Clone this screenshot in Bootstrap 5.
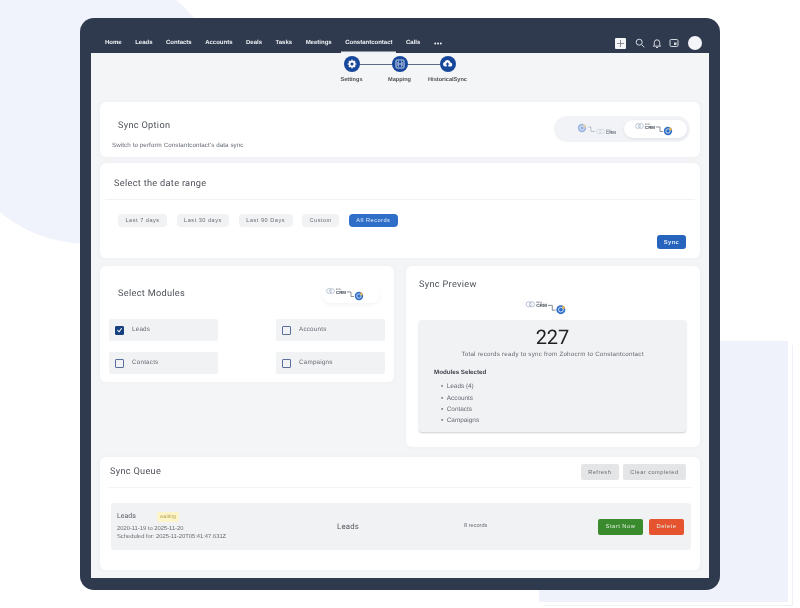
<!DOCTYPE html>
<html lang="en">
<head>
<meta charset="UTF-8">
<title>Constantcontact Sync</title>
<link href="https://cdn.jsdelivr.net/npm/bootstrap@5.3.0/dist/css/bootstrap.min.css" rel="stylesheet">
<style>
    html, body { height: 608px; overflow: hidden; }
    body { background: #fff; font-family: Roboto, "Liberation Sans", sans-serif; color: #4a4f57; position: relative; text-rendering: geometricPrecision; }
    .blob-a { position: absolute; left: -50px; top: -32px; width: 276px; height: 276px; border-radius: 0 50% 50% 50%; background: #f1f3fc; }
    .blob-b { position: absolute; left: 539px; top: 341px; width: 249px; height: 261px; background: #eff2fb; }
    .blob-c { position: absolute; left: 544px; top: 345px; width: 249px; height: 261px; border: 1px solid #eef1f8; border-left: 0; border-top: 0; }
    .device { position: relative; margin: 18px 0 0 80px; width: 640px; height: 572px; background: #2f3a4e; border-radius: 14px; padding: 0 11px 12px; display: flex; flex-direction: column; filter: blur(.3px); }
    .topbar { height: 35px; flex: none; padding: 15px 7px 0 14px; }
    .topbar a { color: #eef0f4; font-family: "Liberation Sans", sans-serif; font-size: 6px; font-weight: 700; text-decoration: none; height: 20px; line-height: 20px; display: block; margin-right: 13.5px; }
    .topbar a.on { box-shadow: inset 0 -1.5px 0 #eef0f4; margin: 0 9.500px 0 -4px; padding: 0 4px; }
    .top-icon { width: 12px; height: 12px; margin-left: 5px; }
    .plus-box { width: 11px; height: 11px; background: #f4f5f7; border-radius: 1px; margin-right: 3px; }
    .avatar { width: 14px; height: 14px; background: #f4f5f8; border-radius: 50%; margin-left: 8px; }
    .screen { flex: 1; background: #f4f5f7; padding: 0 9px; overflow: hidden; }
    .stepper { height: 49px; padding-top: 3px; margin-left: -1px; }
    .step { width: 48px; }
    .step-dot { width: 16px; height: 16px; border-radius: 50%; background: #17479a; position: relative; z-index: 1; }
    .step-label { font-family: "Liberation Sans", sans-serif; font-size: 5.6px; font-weight: 700; color: #4b4f55; margin-top: 4px; white-space: nowrap; }
    .step-line { position: absolute; left: 24px; right: 24px; top: 7.5px; height: 1px; background: #5b6a85; }
    .step-row { position: relative; }
    .panel { background: #fff; border-radius: 6px; box-shadow: 0 0 4px rgba(60, 70, 90, .04); }
    .panel-sync { height: 55px; padding: 17px 10px 0 12px; margin-bottom: 6px; }
    .panel-title { font-size: 9.2px; letter-spacing: .3px; color: #4d5158; font-weight: 400; margin: 0; }
    .title-inset { padding-left: 6px; }
    .sub-note { font-family: "Liberation Sans", sans-serif; font-size: 6.2px; letter-spacing: .1px; color: #666b72; margin-top: 8px; }
    .switcher { width: 136px; height: 26px; border-radius: 13px; background: #f1f3f6; padding: 4px 3px 4px 0; margin-top: -3px; }
    .switch-side { width: 68px; opacity: .75; padding-left: 20px; }
    .switch-active { width: 63px; height: 18px; background: #fff; border-radius: 9px; box-shadow: 0 1px 3px rgba(60, 70, 90, .1); margin-left: auto; }
    .crm-word { font-family: "Liberation Sans", sans-serif; font-size: 4.4px; font-weight: 700; fill: #3b4350; }
    .zoho-word { font-family: "Liberation Sans", sans-serif; font-size: 2.4px; fill: #3b4350; }
    .panel-range { height: 95px; padding: 0 5px; margin-bottom: 8px; }
    .range-head { height: 37px; padding: 14px 9px 0; border-bottom: 1px solid #f1f2f4; }
    .chip-row { padding: 14px 0 0 13px; gap: 9.5px; }
    .chip { background: #f1f2f4; color: #666b72; font-family: "Liberation Sans", sans-serif; font-size: 5.6px; letter-spacing: .5px; border: 0; border-radius: 4px; height: 13px; padding: 0 7.5px; line-height: 13px; }
    .chip.chosen { background: #2f6fc7; color: #eaf1fb; }
    .sync-go { background: #2664bd; color: #e6eefa; font-family: "Liberation Sans", sans-serif; font-size: 5.8px; letter-spacing: .4px; border: 0; border-radius: 3px; width: 29px; height: 14px; padding: 0; margin: 8px 9px 0 auto; display: block; font-weight: 700; }
    .lower { gap: 12px; margin-bottom: 10px; align-items: flex-start; }
    .panel-mods { width: 294px; height: 116px; padding: 0 9px; }
    .panel-preview { width: 294px; height: 181px; padding: 12px 14px 0 13px; }
    .mods-head { height: 53px; padding: 3px 5px 0 9px; }
    .logo-pill { width: 58px; height: 18px; border-radius: 9px; box-shadow: 0 2px 4px rgba(60, 70, 90, .06); padding-left: 4px; }
    .mods-grid { display: grid; grid-template-columns: 109px 109px; justify-content: space-between; row-gap: 11px; }
    .mod-item { background: #f1f2f4; height: 22px; border-radius: 2px; padding-left: 6px; font-family: "Liberation Sans", sans-serif; font-size: 6.3px; letter-spacing: .2px; color: #666b72; gap: 8px; }
    .tick { width: 9px; height: 9px; border: 1px solid #5c6f9c; border-radius: 1px; flex: none; }
    .tick.set { background: #17407f; border-color: #17407f; }
    .flow-small { margin-right: 10px; }
    .preview-box { background: #f1f2f4; border-radius: 3px; height: 112px; box-shadow: 0 1px 2px rgba(0, 0, 0, .2); padding: 5px 15px 0; margin-top: 5px; width: 267px; }
    .preview-count { font-size: 20px; line-height: 24px; color: #222; text-align: center; }
    .preview-text { font-family: "Liberation Sans", sans-serif; font-size: 6.2px; letter-spacing: .25px; text-align: center; color: #666b72; margin-top: 1px; }
    .preview-head { font-family: "Liberation Sans", sans-serif; font-size: 6.2px; font-weight: 700; color: #3f434a; margin-top: 9px; }
    .preview-list { font-family: "Liberation Sans", sans-serif; font-size: 6.4px; color: #666b72; margin: 4px 0 0; padding: 0 0 0 7px; line-height: 11.3px; list-style: none; }
    .preview-list li::before { content: "\2022"; margin-right: 3.5px; }
    .panel-queue { height: 113px; padding: 0 9px 0 9px; }
    .queue-head { height: 31px; border-bottom: 1px solid #f2f3f5; padding: 0 5px 0 1px; margin-bottom: 15px; }
    .queue-btn { background: #e4e5e7; color: #666b72; font-family: "Liberation Sans", sans-serif; font-size: 5.6px; letter-spacing: .5px; border: 0; border-radius: 2px; height: 16px; padding: 0 7.5px; }
    .queue-row { background: #f1f2f4; height: 47px; border-radius: 3px; margin-left: 2px; padding: 0 7px 0 6px; }
    .job-cell { width: 220px; color: #666b72; font-family: "Liberation Sans", sans-serif; font-size: 5.8px; line-height: 8px; }
    .job-name { font-family: Roboto, sans-serif; font-size: 7px; color: #5a5f66; }
    .waiting { background: #fdf5c9; color: #b9a450; font-size: 5.2px; padding: 2px 3px; border-radius: 2px; margin-left: 21px; }
    .job-module { width: 127px; font-size: 7.8px; color: #55595f; letter-spacing: .2px; }
    .job-count { font-family: "Liberation Sans", sans-serif; font-size: 5.6px; color: #666b72; }
    .act-start, .act-del { color: #e8efe6; font-family: "Liberation Sans", sans-serif; font-size: 5.8px; letter-spacing: .5px; border: 0; border-radius: 2px; height: 16px; padding: 0; }
    .act-start { background: #3a8a2e; width: 45px; margin-right: 6px; }
    .act-del { background: #e6532f; width: 35px; }
</style>
</head>
<body>
<div class="blob-a"></div>
<div class="blob-b"></div>
<div class="blob-c"></div>

<div class="device">
    <nav class="topbar d-flex align-items-center">
        <a href="#">Home</a>
        <a href="#">Leads</a>
        <a href="#">Contacts</a>
        <a href="#">Accounts</a>
        <a href="#">Deals</a>
        <a href="#">Tasks</a>
        <a href="#">Meetings</a>
        <a href="#" class="on">Constantcontact</a>
        <a href="#">Calls</a>
        <svg width="8" height="3" viewBox="0 0 8 3"><circle cx="1.200" cy="1.500" r="1" fill="#eef0f4"/><circle cx="4" cy="1.500" r="1" fill="#eef0f4"/><circle cx="6.800" cy="1.500" r="1" fill="#eef0f4"/></svg>
        <div class="ms-auto d-flex align-items-center">
            <div class="plus-box d-flex align-items-center justify-content-center">
                <svg width="7" height="7" viewBox="0 0 7 7"><path d="M3.500 0v7M0 3.500h7" stroke="#6d7480" stroke-width=".8"/></svg>
            </div>
            <svg class="top-icon" viewBox="0 0 12 12" fill="none" stroke="#d5d9e0" stroke-width="1"><circle cx="5.200" cy="5.200" r="3"/><path d="M7.500 7.500l2.800 2.800"/></svg>
            <svg class="top-icon" viewBox="0 0 12 12" fill="none" stroke="#d5d9e0" stroke-width="1"><path d="M3.300 8.300V5.500a2.700 2.700 0 0 1 5.400 0v2.800l1 .8H2.300zM5 10.500h2"/></svg>
            <svg class="top-icon" viewBox="0 0 12 12" fill="none" stroke="#d5d9e0" stroke-width="1"><rect x="2" y="2.500" width="8" height="7" rx="1.200"/><rect x="6" y="5.500" width="2.500" height="2.500" fill="#d5d9e0" stroke="none"/></svg>
            <div class="avatar"></div>
        </div>
    </nav>

    <main class="screen">
        <div class="stepper d-flex justify-content-center">
            <div class="step-row d-flex">
                <div class="step-line"></div>
                <div class="step d-flex flex-column align-items-center">
                    <div class="step-dot d-flex align-items-center justify-content-center">
                        <svg width="10" height="10" viewBox="0 0 10 10"><circle cx="5" cy="5" r="2.600" fill="none" stroke="#fff" stroke-width="1.800"/><path d="M5 .5v9M.5 5h9M1.800 1.800l6.400 6.400M8.200 1.800L1.800 8.200" stroke="#fff" stroke-width="1.100"/><circle cx="5" cy="5" r="1.500" fill="#17479a"/></svg>
                    </div>
                    <div class="step-label">Settings</div>
                </div>
                <div class="step d-flex flex-column align-items-center">
                    <div class="step-dot d-flex align-items-center justify-content-center">
                        <svg width="10" height="10" viewBox="0 0 10 10" fill="none" stroke="#dfe7f5" stroke-width=".9"><rect x="1" y="1" width="8" height="8" rx="1"/><path d="M4 3H3v4h1M6 3h1v4H6M3.500 5h3"/></svg>
                    </div>
                    <div class="step-label">Mapping</div>
                </div>
                <div class="step d-flex flex-column align-items-center">
                    <div class="step-dot d-flex align-items-center justify-content-center">
                        <svg width="11" height="10" viewBox="0 0 11 10"><path d="M3 7.500a2.300 2.300 0 0 1-.3-4.500 3 3 0 0 1 5.700.4 2 2 0 0 1-.4 4.100H6.300V5.500h1.200L5.500 3.300 3.500 5.500h1.200v2z" fill="#fff"/></svg>
                    </div>
                    <div class="step-label">HistoricalSync</div>
                </div>
            </div>
        </div>

        <section class="panel panel-sync d-flex justify-content-between">
            <div>
                <div class="panel-title title-inset">Sync Option</div>
                <div class="sub-note">Switch to perform Constantcontact's data sync</div>
            </div>
            <div class="switcher d-flex align-items-center">
                <div class="switch-side d-flex justify-content-center">
                    <svg width="42" height="14" viewBox="0 0 42 14">
                        <circle cx="5" cy="6" r="4.200" fill="#7d9fdc"/>
                        <circle cx="5" cy="6" r="2.200" fill="none" stroke="#fff" stroke-width=".7"/>
                        <path d="M6 2a4 4 0 0 1 3 3l-2 .5z" fill="#f2c877"/>
                        <path d="M11 5h3v4.500h4" fill="none" stroke="#7c8694" stroke-width=".6"/>
                        <circle cx="22" cy="9.500" r="2.400" fill="none" stroke="#c3ccd8" stroke-width=".7"/>
                        <circle cx="25" cy="9.500" r="2.400" fill="none" stroke="#c3ccd8" stroke-width=".7"/>
                        <text x="29" y="8.500" class="zoho-word">Zoho</text>
                        <text x="29" y="12.300" class="crm-word">CRM</text>
                    </svg>
                </div>
                <div class="switch-active d-flex align-items-center justify-content-center">
                    <svg width="42" height="14" viewBox="0 0 42 14">
                        <circle cx="3" cy="4" r="2.400" fill="none" stroke="#9fb0c6" stroke-width=".7"/>
                        <circle cx="6" cy="4" r="2.400" fill="none" stroke="#9fb0c6" stroke-width=".7"/>
                        <text x="10" y="3" class="zoho-word">Zoho</text>
                        <text x="10" y="6.800" class="crm-word">CRM</text>
                        <path d="M21 5h4v4.500h3" fill="none" stroke="#3e4a5c" stroke-width=".6"/>
                        <circle cx="33" cy="9" r="4.200" fill="#2f6fc7"/>
                        <circle cx="33" cy="9" r="2.200" fill="none" stroke="#fff" stroke-width=".7"/>
                        <path d="M34 5a4 4 0 0 1 3 3l-2 .5z" fill="#f2b33d"/>
                    </svg>
                </div>
            </div>
        </section>

        <section class="panel panel-range">
            <div class="range-head"><div class="panel-title">Select the date range</div></div>
            <div class="chip-row d-flex">
                <button class="chip">Last 7 days</button>
                <button class="chip">Last 30 days</button>
                <button class="chip">Last 90 Days</button>
                <button class="chip">Custom</button>
                <button class="chip chosen">All Records</button>
            </div>
            <button class="sync-go">Sync</button>
        </section>

        <div class="lower d-flex">
            <section class="panel panel-mods">
                <div class="mods-head d-flex align-items-center justify-content-between">
                    <div class="panel-title">Select Modules</div>
                    <div class="logo-pill d-flex align-items-center">
                        <svg width="42" height="14" viewBox="0 0 42 14">
                            <circle cx="3" cy="4" r="2.400" fill="none" stroke="#9fb0c6" stroke-width=".7"/>
                            <circle cx="6" cy="4" r="2.400" fill="none" stroke="#9fb0c6" stroke-width=".7"/>
                            <text x="10" y="3" class="zoho-word">Zoho</text>
                            <text x="10" y="6.800" class="crm-word">CRM</text>
                            <path d="M21 5h4v4.500h3" fill="none" stroke="#3e4a5c" stroke-width=".6"/>
                            <circle cx="33" cy="9" r="4.200" fill="#2f6fc7"/>
                            <circle cx="33" cy="9" r="2.200" fill="none" stroke="#fff" stroke-width=".7"/>
                            <path d="M34 5a4 4 0 0 1 3 3l-2 .5z" fill="#f2b33d"/>
                        </svg>
                    </div>
                </div>
                <div class="mods-grid">
                    <div class="mod-item d-flex align-items-center">
                        <span class="tick set d-flex align-items-center justify-content-center"><svg width="8" height="8" viewBox="0 0 8 8"><path d="M1.500 4l2 2 3-4" fill="none" stroke="#fff" stroke-width="1.200"/></svg></span>Leads
                    </div>
                    <div class="mod-item d-flex align-items-center"><span class="tick"></span>Accounts</div>
                    <div class="mod-item d-flex align-items-center"><span class="tick"></span>Contacts</div>
                    <div class="mod-item d-flex align-items-center"><span class="tick"></span>Campaigns</div>
                </div>
            </section>

            <section class="panel panel-preview">
                <div class="panel-title">Sync Preview</div>
                <div class="d-flex justify-content-center mt-2">
                    <svg class="flow-small" width="46" height="15" viewBox="0 0 42 14">
                        <circle cx="3" cy="4" r="2.400" fill="none" stroke="#9fb0c6" stroke-width=".7"/>
                        <circle cx="6" cy="4" r="2.400" fill="none" stroke="#9fb0c6" stroke-width=".7"/>
                        <text x="10" y="3" class="zoho-word">Zoho</text>
                        <text x="10" y="6.800" class="crm-word">CRM</text>
                        <path d="M21 5h4v4.500h3" fill="none" stroke="#3e4a5c" stroke-width=".6"/>
                        <circle cx="33" cy="9" r="4.200" fill="#2f6fc7"/>
                        <circle cx="33" cy="9" r="2.200" fill="none" stroke="#fff" stroke-width=".7"/>
                        <path d="M34 5a4 4 0 0 1 3 3l-2 .5z" fill="#f2b33d"/>
                    </svg>
                </div>
                <div class="preview-box">
                    <div class="preview-count">227</div>
                    <div class="preview-text">Total records ready to sync from Zohocrm to Constantcontact</div>
                    <div class="preview-head">Modules Selected</div>
                    <ul class="preview-list">
                        <li>Leads (4)</li>
                        <li>Accounts</li>
                        <li>Contacts</li>
                        <li>Campaigns</li>
                    </ul>
                </div>
            </section>
        </div>

        <section class="panel panel-queue">
            <div class="queue-head d-flex align-items-center justify-content-between">
                <div class="panel-title">Sync Queue</div>
                <div class="d-flex gap-1">
                    <button class="queue-btn">Refresh</button>
                    <button class="queue-btn">Clear completed</button>
                </div>
            </div>
            <div class="queue-row d-flex align-items-center">
                <div class="job-cell">
                    <div class="mb-1"><span class="job-name">Leads</span><span class="waiting">waiting</span></div>
                    <div>2020-11-19 to 2025-11-20</div>
                    <div>Scheduled for: 2025-11-20T05:41:47.631Z</div>
                </div>
                <div class="job-module">Leads</div>
                <div class="job-count">8 records</div>
                <div class="ms-auto d-flex">
                    <button class="act-start">Start Now</button>
                    <button class="act-del">Delete</button>
                </div>
            </div>
        </section>
    </main>
</div>
<script src="https://cdn.jsdelivr.net/npm/bootstrap@5.3.0/dist/js/bootstrap.bundle.min.js"></script>
</body>
</html>
